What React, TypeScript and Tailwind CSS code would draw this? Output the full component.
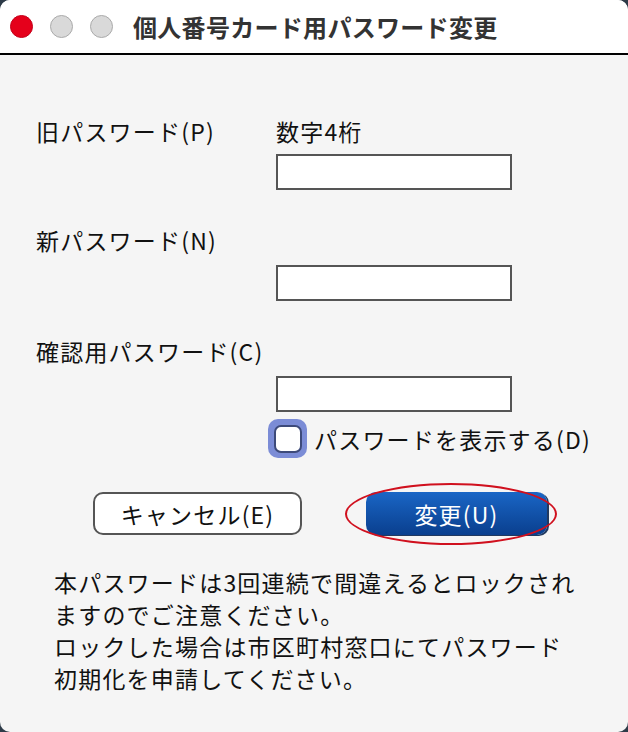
export default function App() {
  const font = { fontFamily: '"Noto Sans CJK JP", "Noto Sans", sans-serif' }

  return (
    <div className="h-[732px] w-[628px] bg-[#2d3b48]" style={font}>
      <div className="flex h-full w-full flex-col overflow-hidden rounded-[10px] bg-[#f5f5f5]">
        {/* title bar */}
        <div className="flex h-[55px] shrink-0 items-center border-b-2 border-black bg-white pl-[10px]">
          <span className="h-[23px] w-[23px] rounded-full border border-[#c4001a] bg-[#e5001b]" />
          <span className="ml-[17px] h-[23px] w-[23px] rounded-full border-[1.5px] border-[#aaaaaa] bg-[#d9d9d9]" />
          <span className="ml-[17px] h-[23px] w-[23px] rounded-full border-[1.5px] border-[#aaaaaa] bg-[#d9d9d9]" />
          <span className="ml-[20px] text-[24px] leading-[30px] font-bold tracking-[0.3px] text-[#333333]">
            個人番号カード用パスワード変更
          </span>
        </div>

        {/* form */}
        <div className="flex flex-col pl-[36px] text-[23px] leading-[28px] tracking-[1.2px] text-[#111111]">
          <div className="mt-[62px] flex">
            <span className="w-[240px]">旧パスワード(P)</span>
            <span>数字4桁</span>
          </div>
          <div className="ml-[240px] mt-[9px] h-[36px] w-[236px] border-2 border-[#555555] bg-white" />

          <div className="mt-[36px]">新パスワード(N)</div>
          <div className="ml-[240px] mt-[11px] h-[36px] w-[236px] border-2 border-[#555555] bg-white" />

          <div className="mt-[36px]">確認用パスワード(C)</div>
          <div className="ml-[240px] mt-[11px] h-[36px] w-[236px] border-2 border-[#555555] bg-white" />

          <div className="ml-[232px] mt-[7px] flex items-center">
            <span className="flex h-[39px] w-[39px] items-center justify-center rounded-[10px] bg-[#7b8cd6]">
              <span className="h-[28px] w-[28px] rounded-[7px] border-2 border-[#3d4a7a] bg-white" />
            </span>
            <span className="ml-[7px]">パスワードを表示する(D)</span>
          </div>

          {/* buttons */}
          <div className="relative ml-[57px] mt-[34px] flex">
            <button className="h-[43px] w-[209px] rounded-[10px] border-2 border-[#555555] bg-white text-[23px] leading-[28px] tracking-[1.2px] text-[#111111]">
              キャンセル(E)
            </button>
            <div className="relative ml-[64px]">
              <button className="h-[43px] w-[181px] rounded-[10px] bg-gradient-to-b from-[#1a66c6] to-[#0a3f8e] text-[23px] leading-[28px] tracking-[1.2px] text-white shadow-[2px_1px_0_#22395f]">
                変更(U)
              </button>
              <span className="pointer-events-none absolute left-[-21px] top-[-9px] h-[62px] w-[212px] rounded-[50%] border-2 border-[#d0101e]" />
            </div>
          </div>

          {/* note */}
          <p className="ml-[18px] mt-[31px] text-[23px] leading-[32px]">
            本パスワードは3回連続で間違えるとロックされ
            <br />
            ますのでご注意ください。
            <br />
            ロックした場合は市区町村窓口にてパスワード
            <br />
            初期化を申請してください。
          </p>
        </div>
      </div>
    </div>
  )
}
